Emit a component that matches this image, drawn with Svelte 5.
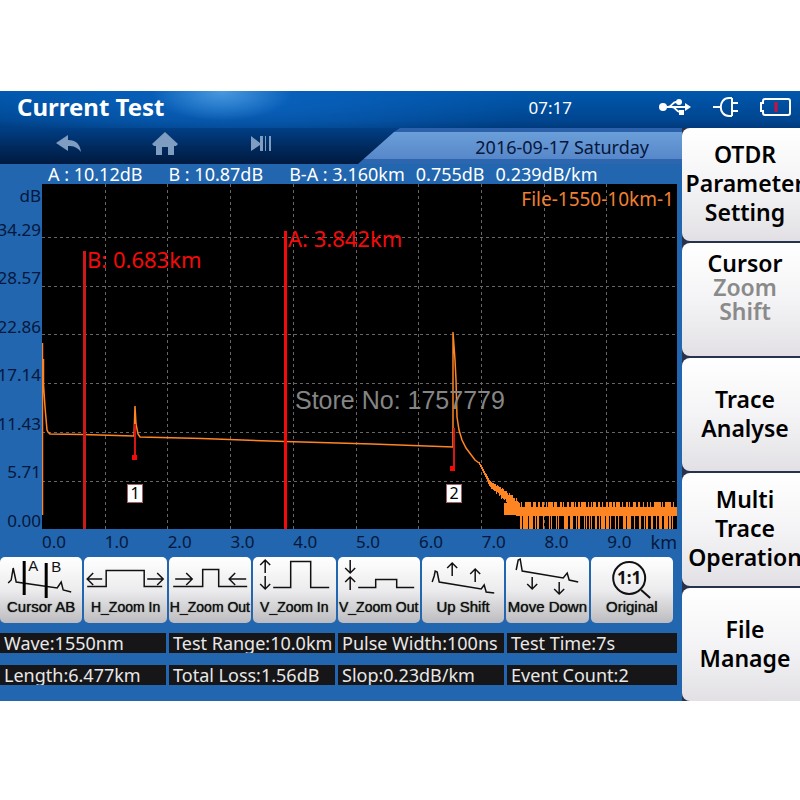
<script>
	let mode = $state('Cursor');
	const modes = ['Cursor', 'Zoom', 'Shift'];

	const levels = ['34.29', '28.57', '22.86', '17.14', '11.43', '5.71', '0.00'];
	const distances = ['0.0', '1.0', '2.0', '3.0', '4.0', '5.0', '6.0', '7.0', '8.0', '9.0'];

	const stats = [
		'Wave:1550nm',
		'Test Range:10.0km',
		'Pulse Width:100ns',
		'Test Time:7s',
		'Length:6.477km',
		'Total Loss:1.56dB',
		'Slop:0.23dB/km',
		'Event Count:2'
	];

	const gridX = [1, 2, 3, 4, 5, 6, 7, 8, 9].map((i) => Math.round(i * 62.7) + 0.5);
	const gridY = [0, 1, 2, 3, 4, 5].map((i) => Math.round(53 + i * 48.7) + 0.5);

	const trace =
		'M0.5 331V159M1.5 175V200L3 223L5 246L6 248L8 250L40 250.5L92 252L93 222L94 240L96 250L98 253' +
		'L160 254.5L243 257.5L330 260L411 263V148L413 176L414 196L415 233L417 246L420 256L424 264L433 276L437 279';

	// noise floor after the end of the fibre
	function buildNoise() {
		let seed = 11;
		const rand = () => {
			seed = (seed * 16807) % 2147483647;
			return seed / 2147483647;
		};
		let d = '';
		for (let x = 437; x < 478; x++) {
			const t = x - 437;
			const y = t < 10 ? 279 + t * 1.9 : 298 + (t - 10) * 0.85;
			const h = 3 + t / 5;
			d += `M${x} ${Math.round(y - h / 3 - (rand() * t) / 10)}h1v${Math.round(h + (rand() * t) / 8)}h-1z`;
		}
		d += 'M462 319h14v12h-14z';
		// solid band with short ticks above and long drops below, in uneven runs
		d += 'M474 323h161v9h-161z';
		for (let x = 476; x < 634; ) {
			const w = 1 + Math.floor(rand() * rand() * 7);
			d += `M${x} 318h${w}v6h-${w}z`;
			x += w + 1 + Math.floor(rand() * 3);
		}
		for (let x = 478; x < 633; ) {
			const w = 1 + Math.floor(rand() * rand() * 6);
			d += `M${x} 331h${w}v14h-${w}z`;
			x += w + 1 + Math.floor(rand() * rand() * 6);
		}
		return d;
	}
	const noise = buildNoise();
</script>

{#snippet arrow(x, y, dir, len)}
	{#if dir === 'up'}
		<path d="M{x} {y + len}V{y}M{x - 5} {y + 5}L{x} {y}L{x + 5} {y + 5}" />
	{:else if dir === 'down'}
		<path d="M{x} {y}V{y + len}M{x - 5} {y + len - 5}L{x} {y + len}L{x + 5} {y + len - 5}" />
	{:else if dir === 'left'}
		<path d="M{x + len} {y}H{x}M{x + 6} {y - 6}L{x} {y}L{x + 6} {y + 6}" />
	{:else}
		<path d="M{x} {y}H{x + len}M{x + len - 6} {y - 6}L{x + len} {y}L{x + len - 6} {y + 6}" />
	{/if}
{/snippet}

<div class="device">
	<header>
		<h1>Current Test</h1>
		<time>07:17</time>
		<div class="status">
			<svg width="33" height="18" viewBox="0 0 33 18" role="img" aria-label="USB">
				<path d="M4 9H28M9 9C13 9 13 4 17 4H20M13 9C17 9 17 14 21 14H22" />
				<circle class="solid" cx="4" cy="9" r="4" />
				<circle class="solid" cx="20" cy="4" r="3" />
				<rect class="solid" x="20" y="12" width="5" height="5" />
				<path class="solid" d="M26 5L32 9L26 13Z" />
			</svg>
			<svg width="26" height="20" viewBox="0 0 26 20" role="img" aria-label="Power">
				<path d="M0 10H8M19 1V19M19 1H16C5 1 5 19 16 19H19M19 6H25M19 14H25" />
			</svg>
			<svg width="31" height="18" viewBox="0 0 31 18" role="img" aria-label="Battery low">
				<path d="M5 1H28Q30 1 30 3V15Q30 17 28 17H5Q3 17 3 15V13H1V5H3V3Q3 1 5 1Z" />
				<path class="low" d="M16 4V14" />
			</svg>
		</div>
	</header>

	<div class="body">
		<main>
			<div class="nav">
				<button aria-label="Back">
					<svg width="26" height="20" viewBox="0 0 26 20">
						<path d="M0 9L12 1V6C20 6 24 10 25 18C21 13 18 12 12 12V17Z" />
					</svg>
				</button>
				<button aria-label="Home">
					<svg width="28" height="24" viewBox="0 0 28 24">
						<path d="M14 0L27 12L25 14H23V23H17V15H11V23H5V14H3L1 12Z" />
					</svg>
				</button>
				<button aria-label="Play or pause">
					<svg width="22" height="18" viewBox="0 0 22 18">
						<path d="M1 1L10 8V1H13V16H10V10L1 16ZM15 1H16V16H15ZM19 1H21V16H19Z" />
					</svg>
				</button>
				<div class="date"><span>2016-09-17 Saturday</span></div>
			</div>

			<div class="readout">
				<span>A : 10.12dB</span>
				<span>B : 10.87dB</span>
				<span class="diff"><span>B-A : 3.160km</span><span>0.755dB</span><span>0.239dB/km</span></span>
			</div>

			<div class="chart">
				<div class="levels">
					<span class="unit">dB</span>
					{#each levels as level}
						<span>{level}</span>
					{/each}
				</div>
				<svg class="plot" viewBox="0 0 635 345" role="img" aria-label="OTDR trace">
					<rect width="635" height="345" fill="#000" />
					<g class="grid">
						{#each gridX as x}
							<path d="M{x} 0V345" />
						{/each}
						{#each gridY as y}
							<path d="M0 {y}H635" />
						{/each}
					</g>
					<text class="file" x="632" y="22">File-1550-10km-1</text>
					<path class="trace" d={trace} />
					<path class="noise" d={noise} />

					<path class="cursor dim" d="M42.5 67V345" />
					<text class="mark" x="45" y="84">B: 0.683km</text>
					<path class="cursor" d="M243.5 47V345" />
					<text class="mark" x="246" y="63">A: 3.842km</text>

					<path class="event" d="M93 240V273M412 244V284" />
					<rect class="dot" x="90" y="271" width="5" height="5" />
					<rect class="dot" x="408" y="282" width="5" height="5" />
					<rect class="tag" x="85.5" y="300.5" width="15" height="18" />
					<text class="num" x="93" y="315">1</text>
					<rect class="tag" x="404.5" y="300.5" width="15" height="18" />
					<text class="num" x="412" y="315">2</text>

					<text class="store" x="253" y="225">Store No: 1757779</text>
				</svg>
				<div class="distances">
					{#each distances as distance}
						<span>{distance}</span>
					{/each}
					<span class="km">km</span>
				</div>
			</div>

			<div class="actions">
				<button>
					<svg viewBox="0 0 82 42">
						<path d="M8 26L11 23L13 11L16 25L57 31L61 25L63 33L71 35" />
						<path class="bar" d="M24 4V38M46 6V41" />
						<text x="28" y="14">A</text>
						<text x="51" y="15">B</text>
					</svg>
					Cursor AB
				</button>
				<button class="tight">
					<svg viewBox="0 0 82 42">
						<path d="M3 29.5H22V13.5H60V29.5H78" />
						{@render arrow(3, 22, 'left', 15)}
						{@render arrow(63, 22, 'right', 16)}
					</svg>
					H_Zoom In
				</button>
				<button class="tight">
					<svg viewBox="0 0 82 42">
						<path d="M4 29.5H33.5V12.5H49.5V29.5H78" />
						{@render arrow(6, 22, 'right', 17)}
						{@render arrow(60, 22, 'left', 17)}
					</svg>
					H_Zoom Out
				</button>
				<button class="tight">
					<svg viewBox="0 0 82 42">
						<path d="M20 30.5H37.5V4.5H57.5V30.5H76" />
						{@render arrow(12, 3, 'up', 13)}
						{@render arrow(12, 19, 'down', 13)}
					</svg>
					V_Zoom In
				</button>
				<button class="tight">
					<svg viewBox="0 0 82 42">
						<path d="M20 30.5H37.5V22.5H58.5V30.5H76" />
						{@render arrow(12, 3, 'down', 13)}
						{@render arrow(12, 20, 'up', 13)}
					</svg>
					V_Zoom Out
				</button>
				<button>
					<svg viewBox="0 0 82 42">
						<path d="M10 25L12 19L13 14L15 15L17 25L59 32L62 28L64 35L72 36" />
						{@render arrow(30, 6, 'up', 13)}
						{@render arrow(53, 12, 'up', 13)}
					</svg>
					Up Shift
				</button>
				<button>
					<svg viewBox="0 0 82 42">
						<path d="M10 13L12 3L14 2L16 14L57 21L61 16L63 23L72 25" />
						{@render arrow(26, 20, 'down', 12)}
						{@render arrow(53, 25, 'down', 12)}
					</svg>
					Move Down
				</button>
				<button>
					<svg viewBox="0 0 82 42">
						<circle cx="38" cy="21" r="16" />
						<path class="handle" d="M50 33L59 41" />
						<text class="ratio" x="38" y="27">1:1</text>
					</svg>
					Original
				</button>
			</div>

			<div class="stats">
				{#each stats as stat}
					<span>{stat}</span>
				{/each}
			</div>
		</main>

		<aside>
			<button>OTDR<br />Parameter<br />Setting</button>
			<button class="modes" onclick={() => (mode = modes[(modes.indexOf(mode) + 1) % 3])}>
				{#each modes as m}
					<span class:off={m !== mode}>{m}</span>
				{/each}
			</button>
			<button>Trace<br />Analyse</button>
			<button>Multi<br />Trace<br />Operation</button>
			<button>File<br />Manage</button>
		</aside>
	</div>
</div>

<style>
	:global(body) {
		background: #fff;
	}

	.device {
		margin-top: 91px;
		overflow: hidden;
		background: #2166ae;
		font-family: 'Noto Sans', 'Open Sans', sans-serif;
		font-size: 18px;
		line-height: 20px;
		color: #fff;
	}

	button {
		margin: 0;
		padding: 0;
		border: none;
		background: none;
		font: inherit;
		color: inherit;
		cursor: pointer;
	}

	header {
		display: flex;
		align-items: center;
		height: 37px;
		padding: 0 9px 0 17px;
		box-sizing: border-box;
		background:
			radial-gradient(ellipse 70px 30px at 222px 0, #4a9ae0, transparent),
			radial-gradient(ellipse 300px 50px at 240px 10px, #0a62bd, transparent),
			linear-gradient(#0058ae, #00458f 80%, #003a7c);
	}

	h1 {
		flex: 1;
		margin: 0;
		padding-bottom: 6px;
		font-size: 24px;
		font-weight: 700;
		line-height: 32px;
	}

	time {
		margin-right: 87px;
		padding-bottom: 4px;
	}

	time,
	.levels,
	.distances {
		font-size: 17px;
	}

	.status {
		display: flex;
		align-items: center;
		gap: 21px;
		padding-bottom: 6px;
	}

	.status path {
		fill: none;
		stroke: #fff;
		stroke-width: 2;
	}

	.status .solid {
		fill: #fff;
		stroke: none;
	}

	.status .low {
		stroke: #d0103c;
		stroke-width: 3;
	}

	.body {
		display: flex;
	}

	main {
		flex: 1;
		min-width: 0;
	}

	.nav {
		display: flex;
		height: 36px;
		padding-left: 21px;
		background: linear-gradient(#003f86, #002b60 50%, #001a40);
	}

	.nav button {
		width: 96px;
		display: flex;
		align-items: center;
		justify-content: center;
		padding-bottom: 4px;
	}

	.nav svg {
		fill: #7f9dc0;
	}

	.date {
		width: 324px;
		margin-left: auto;
		text-align: right;
		color: #06173c;
		background: linear-gradient(#2c62ac 4px, #6a9fd9 4px, #5787c9 31px, #2b66af 31px);
		clip-path: polygon(0 100%, 36px 4px, 42px 0, 100% 0, 100% 100%);
	}

	.date span {
		display: block;
		padding: 9px 33px 0 0;
	}

	.readout {
		display: flex;
		gap: 26px;
		height: 20px;
		padding-left: 48px;
		white-space: nowrap;
	}

	.diff {
		display: flex;
		gap: 11px;
	}

	.chart {
		display: grid;
		grid-template-columns: 42px 1fr;
		padding-right: 5px;
		color: #06173c;
	}

	.levels {
		display: flex;
		flex-direction: column;
		justify-content: space-between;
		align-items: flex-end;
		padding: 4px 1px 0 0;
		line-height: 16px;
	}

	.levels .unit {
		margin-bottom: -15px;
	}

	.plot {
		display: block;
		width: 100%;
	}

	.grid path {
		stroke: #666;
		stroke-dasharray: 3 3;
	}

	.trace {
		fill: none;
		stroke: #ff8522;
		stroke-width: 1.5;
	}

	.noise {
		fill: #ff8522;
	}

	.file {
		font-size: 19px;
		fill: #f08030;
		text-anchor: end;
	}

	.cursor {
		stroke: #f50a0a;
		stroke-width: 3;
	}

	.dim {
		stroke: #cc1a1a;
	}

	.mark {
		font-size: 22px;
		fill: #f50a0a;
	}

	.event {
		stroke: #d81414;
		stroke-width: 2;
	}

	.dot {
		fill: #f50a0a;
	}

	.tag {
		fill: #fff;
		stroke: #a06068;
	}

	.num {
		font-size: 16px;
		fill: #000;
		text-anchor: middle;
	}

	.store {
		font-family: 'Liberation Sans', sans-serif;
		font-size: 25px;
		fill: #858585;
	}

	.distances {
		grid-column: 2;
		display: grid;
		grid-template-columns: repeat(9, 16fr) 11fr auto;
		height: 28px;
		line-height: 26px;
	}

	.km {
		font-size: 18px;
	}

	.actions {
		display: grid;
		grid-template-columns: repeat(8, 1fr);
		gap: 2px;
		padding-right: 9px;
		font-family: 'Liberation Sans', sans-serif;
		font-size: 15px;
		line-height: 16px;
		color: #111;
	}

	.actions button {
		min-width: 0;
		height: 66px;
		border-radius: 5px;
		white-space: nowrap;
		display: flex;
		flex-direction: column;
		align-items: center;
		background: linear-gradient(#fff, #ececee 50%, #bcbcc0);
		text-shadow: 0 0 1px #111;
	}

	.actions .tight {
		font-size: 14px;
	}

	.actions svg {
		width: 100%;
		height: 42px;
		fill: none;
		stroke: #111;
		stroke-width: 1.5;
	}

	.actions .bar {
		stroke: #000;
		stroke-width: 3;
	}

	.actions circle,
	.actions .handle {
		stroke-width: 2;
	}

	.actions text {
		font-size: 15px;
		fill: #111;
		stroke: none;
		text-shadow: none;
	}

	.actions .ratio {
		font-family: 'Noto Sans', sans-serif;
		font-size: 17px;
		font-weight: 700;
		text-anchor: middle;
	}

	.stats {
		display: grid;
		grid-template-columns: repeat(3, 166px) 1fr;
		gap: 12px 3px;
		padding: 10px 5px 16px 0;
	}

	.stats span {
		height: 20px;
		padding-left: 4px;
		overflow: hidden;
		white-space: nowrap;
		background: #161618;
		color: #e8e8e8;
	}

	aside {
		width: 118px;
		display: grid;
		grid-template-columns: 126px;
		grid-auto-rows: 1fr;
		gap: 2px;
		overflow: hidden;
		background: #26324e;
		font-size: 23px;
		font-weight: 600;
		line-height: 29px;
		color: #000;
	}

	aside button {
		padding-bottom: 2px;
		border-radius: 8px 0 0 8px;
		background: linear-gradient(#fff, #f4f4f6 50%, #e2e0e4);
	}

	aside .modes {
		line-height: 24px;
		padding-bottom: 26px;
	}

	.modes span {
		display: block;
	}

	.modes .off {
		color: #8a8a8a;
	}
</style>
